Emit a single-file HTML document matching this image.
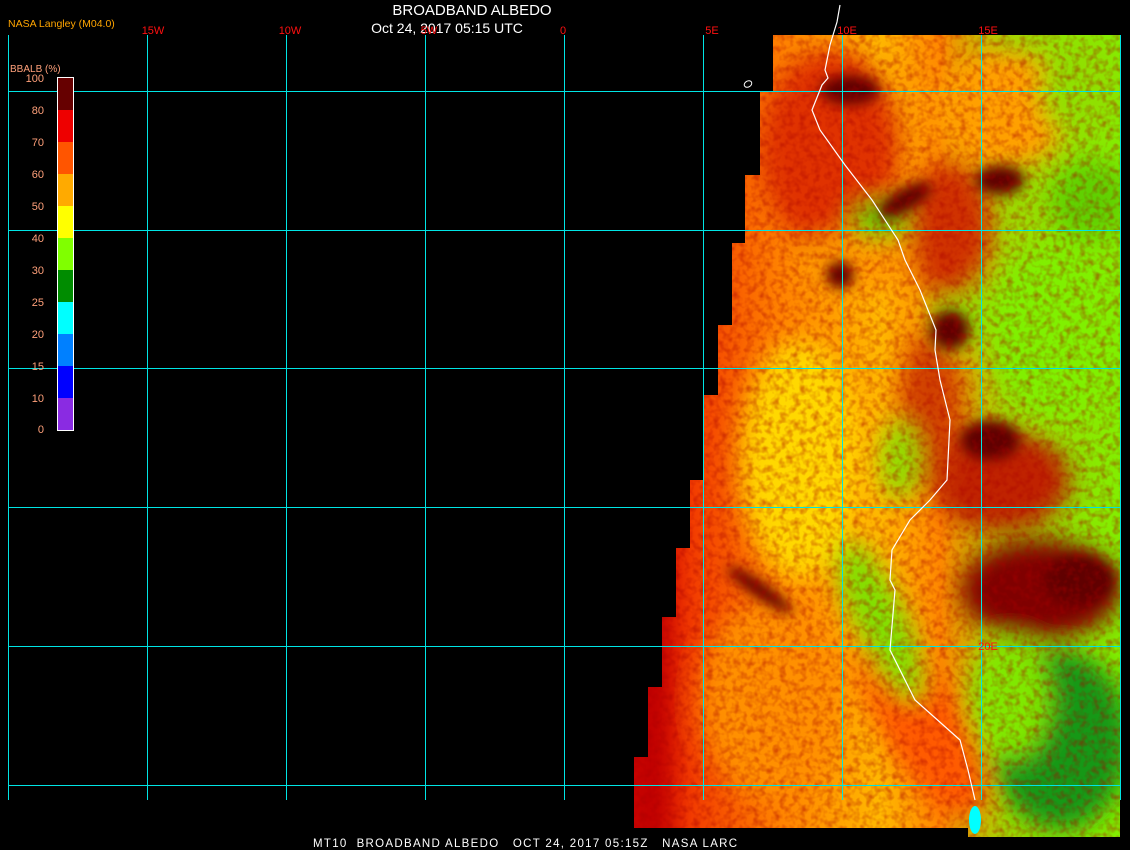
<!DOCTYPE html>
<html><head><meta charset="utf-8"><style>
html,body{margin:0;padding:0;background:#000;width:1130px;height:850px;overflow:hidden}
svg{display:block}
text{font-family:"Liberation Sans",sans-serif}
</style></head><body>
<svg width="1130" height="850" viewBox="0 0 1130 850" xmlns="http://www.w3.org/2000/svg">
<defs>
<clipPath id="img"><polygon points="773,35 1120,35 1120,837 968,837 968,828 634,828 634,757 648,757 648,687 662,687 662,617 676,617 676,548 690,548 690,480 704,480 704,395 718,395 718,325 732,325 732,243 745,243 745,175 760,175 760,91 773,91"/></clipPath>
<linearGradient id="lg" x1="0" y1="0" x2="1" y2="0">
<stop offset="0" stop-color="#d80000"/><stop offset="0.12" stop-color="#f23a00"/><stop offset="0.3" stop-color="#ff8200"/><stop offset="0.5" stop-color="#ffb800"/><stop offset="0.62" stop-color="#ff8800"/><stop offset="0.75" stop-color="#a0d800"/><stop offset="1" stop-color="#80f000"/>
</linearGradient>
<filter id="b6"><feGaussianBlur stdDeviation="6"/></filter>
<filter id="b12"><feGaussianBlur stdDeviation="12"/></filter>
<filter id="nz" x="0" y="0" width="100%" height="100%"><feTurbulence type="fractalNoise" baseFrequency="0.15" numOctaves="2" seed="3"/><feColorMatrix values="0 0 0 0 0.4  0 0 0 0 0  0 0 0 0 0  0 0 0 -2.2 1.3"/></filter>
</defs>
<g clip-path="url(#img)">
<rect x="630" y="30" width="500" height="820" fill="url(#lg)"/>
<g filter="url(#b12)">
<rect x="630" y="30" width="40" height="820" fill="#c00000"/>
<ellipse cx="830" cy="150" rx="70" ry="100" fill="#e03000"/>
<ellipse cx="1000" cy="110" rx="70" ry="60" fill="#ffa000"/>
<ellipse cx="1080" cy="90" rx="40" ry="50" fill="#90e000"/>
<ellipse cx="1090" cy="200" rx="40" ry="40" fill="#60d000"/>
<ellipse cx="1060" cy="330" rx="70" ry="90" fill="#80f000"/>
<ellipse cx="960" cy="300" rx="30" ry="50" fill="#90e000"/>
<ellipse cx="1000" cy="480" rx="70" ry="50" fill="#c02000"/>
<ellipse cx="1040" cy="590" rx="80" ry="50" fill="#800000"/>
<ellipse cx="1060" cy="740" rx="70" ry="90" fill="#189818"/>
<ellipse cx="1010" cy="700" rx="40" ry="60" fill="#80e800"/>
<ellipse cx="920" cy="720" rx="40" ry="110" fill="#ff5a00" transform="rotate(-30 920 720)"/>
<ellipse cx="880" cy="620" rx="25" ry="90" fill="#80e000" transform="rotate(-25 880 620)"/>
<ellipse cx="800" cy="460" rx="60" ry="120" fill="#ffd800"/>
<ellipse cx="770" cy="700" rx="70" ry="100" fill="#ff9000"/>
<ellipse cx="860" cy="260" rx="60" ry="30" fill="#ff9a00"/>
<ellipse cx="930" cy="410" rx="30" ry="80" fill="#d04000"/>
<ellipse cx="950" cy="230" rx="40" ry="70" fill="#d03000"/>
<ellipse cx="880" cy="220" rx="30" ry="20" fill="#60c800"/>
<ellipse cx="900" cy="460" rx="20" ry="40" fill="#90e000"/>
</g>
<g filter="url(#b6)" fill="#600000">
<ellipse cx="905" cy="200" rx="30" ry="12" transform="rotate(-30 905 200)"/>
<ellipse cx="850" cy="90" rx="30" ry="15"/>
<ellipse cx="840" cy="275" rx="14" ry="14"/>
<ellipse cx="1080" cy="580" rx="35" ry="25"/>
<ellipse cx="990" cy="440" rx="30" ry="20"/>
<ellipse cx="760" cy="590" rx="40" ry="8" transform="rotate(35 760 590)"/>
<ellipse cx="1000" cy="180" rx="25" ry="15"/>
<ellipse cx="950" cy="330" rx="20" ry="20"/>
</g>
<rect x="630" y="30" width="500" height="820" filter="url(#nz)" opacity="0.45"/>
<ellipse cx="975" cy="820" rx="6" ry="14" fill="#00ffff"/>
</g>
<g stroke="#00e5e5" stroke-width="1" fill="none">
<path d="M8.5 35V800M147.5 35V800M286.5 35V800M425.5 35V800M564.5 35V800M703.5 35V800M842.5 35V800M981.5 35V800M1120.5 35V800"/>
<path d="M8 91.5H1120M8 230.5H1120M8 368.5H1120M8 507.5H1120M8 646.5H1120M8 785.5H1120"/>
</g>
<polyline fill="none" stroke="#fff" stroke-width="1.2" points="840,5 837,22 830,45 827,60 825,70 828,78 822,85 812,110 820,130 845,165 872,200 898,240 905,260 920,290 936,330 935,350 940,380 950,420 947,480 930,500 910,520 892,550 890,580 895,590 890,650 915,700 960,740 968,770 975,800"/>
<ellipse cx="748" cy="84" rx="4" ry="3" fill="none" stroke="#fff" stroke-width="1" transform="rotate(-30 748 84)"/>
<rect x="57.5" y="77.5" width="16" height="353" fill="none" stroke="#fff"/>
<rect x="58" y="78" width="15" height="32" fill="#660000"/>
<rect x="58" y="110" width="15" height="32" fill="#ee0000"/>
<rect x="58" y="142" width="15" height="32" fill="#ff5500"/>
<rect x="58" y="174" width="15" height="32" fill="#ffaa00"/>
<rect x="58" y="206" width="15" height="32" fill="#ffff00"/>
<rect x="58" y="238" width="15" height="32" fill="#80ff00"/>
<rect x="58" y="270" width="15" height="32" fill="#008c00"/>
<rect x="58" y="302" width="15" height="32" fill="#00ffff"/>
<rect x="58" y="334" width="15" height="32" fill="#0080ff"/>
<rect x="58" y="366" width="15" height="32" fill="#0000ff"/>
<rect x="58" y="398" width="15" height="32" fill="#8a2be2"/>
<g fill="#ffa07a" font-size="11" text-anchor="end">
<text x="44" y="82">100</text><text x="44" y="114">80</text><text x="44" y="146">70</text><text x="44" y="178">60</text><text x="44" y="210">50</text><text x="44" y="242">40</text><text x="44" y="274">30</text><text x="44" y="306">25</text><text x="44" y="338">20</text><text x="44" y="370">15</text><text x="44" y="402">10</text><text x="44" y="433">0</text>
</g>
<text x="10" y="72" fill="#ffa07a" font-size="10">BBALB (%)</text>
<text x="8" y="27" fill="#ffa500" font-size="10.5">NASA Langley (M04.0)</text>
<text x="472" y="15" fill="#fff" font-size="15" text-anchor="middle">BROADBAND ALBEDO</text>
<text x="447" y="33" fill="#fff" font-size="14" text-anchor="middle">Oct 24, 2017 05:15 UTC</text>
<g fill="#ff1010" font-size="11" font-family="Liberation Mono,monospace" text-anchor="middle">
<text x="153" y="34">15W</text><text x="290" y="34">10W</text><text x="429" y="34">5W</text><text x="563" y="34">0</text><text x="712" y="34">5E</text><text x="847" y="34">10E</text><text x="988" y="34">15E</text><text x="988" y="650">20E</text>
</g>
<text x="313" y="847" fill="#fff" font-size="11.5" font-family="Liberation Mono,monospace" letter-spacing="1.3" xml:space="preserve">MT10  BROADBAND ALBEDO   OCT 24, 2017 05:15Z   NASA LARC</text>
</svg>
</body></html>
